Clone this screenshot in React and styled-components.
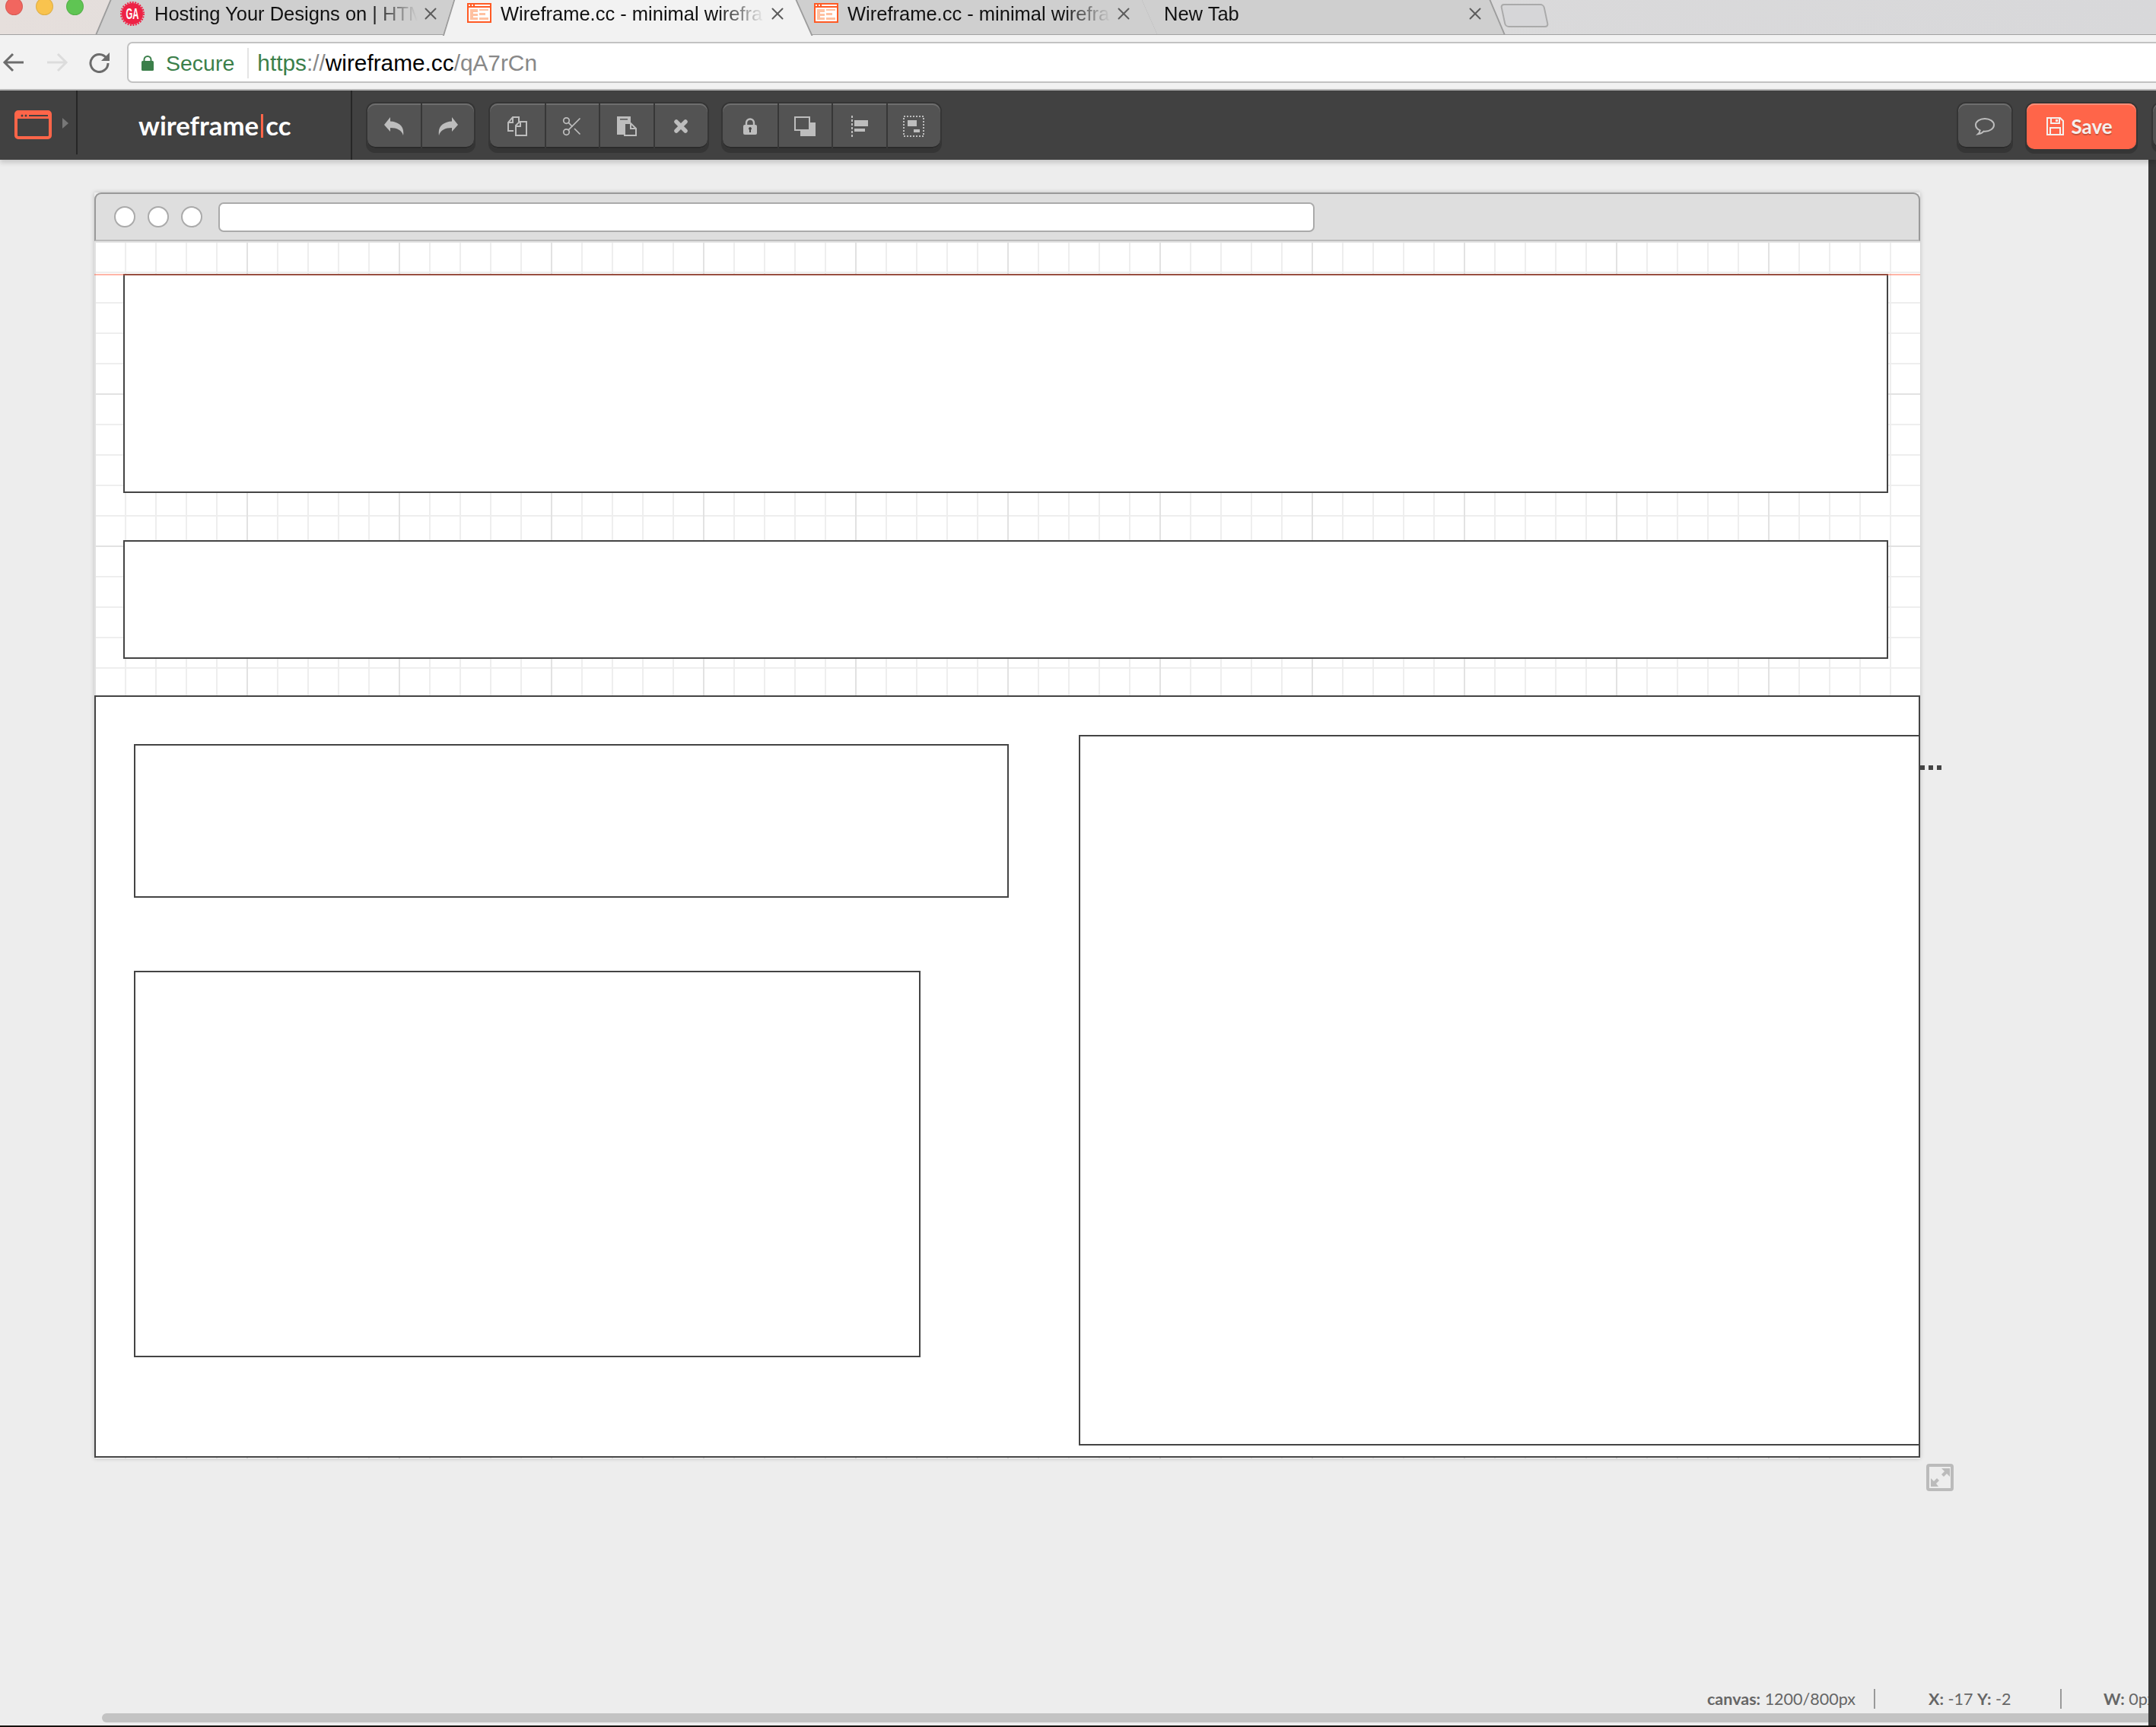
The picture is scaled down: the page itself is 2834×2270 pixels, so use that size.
import React from 'react';
import styled, { createGlobalStyle } from 'styled-components';
import { Scissors, X } from 'lucide-react';

const GlobalStyle = createGlobalStyle`
  html, body {
    margin: 0;
    padding: 0;
    width: 2834px;
    height: 2270px;
    overflow: hidden;
    background: #ededed;
  }
  * { box-sizing: border-box; }
`;

const Page = styled.div`
  width: 2834px;
  height: 2270px;
  display: flex;
  flex-direction: column;
  overflow: hidden;
  font-family: 'Liberation Sans', Arial, sans-serif;
`;

/* browser chrome */
const TabBar = styled.div`
  position: relative;
  flex: none;
  height: 46px;
  display: flex;
  padding-left: 126px;
  background: linear-gradient(to right, #e6dfdc, #dcdbdb 30%, #d8d8da);
  border-bottom: 1px solid #a2a2a2;
`;

const Lights = styled.div`
  position: absolute;
  left: 7px;
  top: -3px;
  display: flex;
  gap: 17px;
`;

const Light = styled.span`
  width: 23px;
  height: 23px;
  border-radius: 50%;
  background: ${p => p.$color};
  border: 1px solid rgba(0, 0, 0, 0.1);
`;

const Tab = styled.div`
  position: relative;
  flex: none;
  width: ${p => p.$width}px;
  height: ${p => (p.$active ? 47 : 45)}px;
  margin-left: ${p => p.$overlap || 0}px;
  padding-left: ${p => p.$pad}px;
  z-index: ${p => (p.$active ? 2 : 1)};
  display: flex;
  align-items: flex-start;
  &::before {
    content: '';
    position: absolute;
    inset: 0;
    background: ${p => (p.$active ? '#f2f2f2' : '#cfcfcf')};
    clip-path: polygon(${p => p.$clip});
  }
`;

const TabEdge = styled.span`
  position: absolute;
  top: 0;
  bottom: 0;
  left: ${p => p.$left}px;
  width: 1.5px;
  background: #9c9c9c;
  transform: skewX(${p => p.$skew}deg);
`;

const TabIcon = styled.svg`
  position: relative;
  flex: none;
  display: block;
  margin-top: ${p => p.$top}px;
`;

const TabTitle = styled.span`
  position: relative;
  flex: none;
  width: ${p => p.$width}px;
  margin-left: ${p => p.$gap}px;
  font-size: 25.5px;
  line-height: 36px;
  color: #111;
  white-space: nowrap;
  -webkit-mask-image: linear-gradient(to right, #000 82%, transparent 100%);
  mask-image: linear-gradient(to right, #000 82%, transparent 100%);
`;

const TabClose = styled(X)`
  position: relative;
  flex: none;
  margin: 5px 0 0 4px;
  color: #5d5d5d;
`;

const NewTab = styled.div`
  flex: none;
  width: 58px;
  height: 31px;
  margin: 5px 0 0 -2px;
  background: #d6d6d8;
  border: 2px solid #aaa;
  border-radius: 5px;
  transform: skewX(12deg);
`;

const AddressRow = styled.div`
  flex: none;
  height: 73px;
  display: flex;
  align-items: center;
  background: #f2f2f2;
  border-bottom: 2px solid #b8b8b8;
`;

const NavIcon = styled.svg`
  flex: none;
  display: block;
  margin-left: ${p => p.$left}px;
  fill: none;
  stroke: ${p => p.$color};
  stroke-width: 3;
`;

const AddressBox = styled.div`
  flex: 1;
  height: 54px;
  margin: 0 -20px 0 22px;
  display: flex;
  align-items: center;
  padding: 2px 0 0 17px;
  background: #fff;
  border: 2px solid #c2c2c2;
  border-radius: 7px;
`;

const SecureLabel = styled.span`
  margin-left: 16px;
  padding-right: 17px;
  height: 40px;
  line-height: 40px;
  font-size: 28.5px;
  color: #3b7f4a;
  border-right: 2px solid #e4e4e4;
`;

const Url = styled.span`
  margin-left: 11px;
  font-size: 29.8px;
  color: #888;
`;

const UrlPart = styled.span`
  color: ${p => p.$color};
`;

/* editor toolbar */
const Toolbar = styled.div`
  position: relative;
  z-index: 5;
  flex: none;
  height: 91px;
  display: flex;
  background: #414141;
  box-shadow: 0 4px 6px rgba(0, 0, 0, 0.16);
  overflow: hidden;
`;

const MenuCell = styled.div`
  flex: none;
  width: 102px;
  height: 84px;
  display: flex;
  align-items: center;
  padding: 6px 0 0 19px;
  border-right: 2px solid #262626;
`;

const Caret = styled.span`
  margin: -4px 0 0 14px;
  border-left: 8px solid #777;
  border-top: 7px solid transparent;
  border-bottom: 7px solid transparent;
`;

const LogoCell = styled.div`
  flex: none;
  width: 361px;
  display: flex;
  align-items: center;
  padding-left: 80px;
  border-right: 2px solid #262626;
`;

const Logo = styled.div`
  font-family: Lato, sans-serif;
  font-weight: 700;
  font-size: 34.8px;
  line-height: 40px;
  color: #fff;
  display: flex;
  align-items: center;
`;

const LogoBar = styled.span`
  width: 3px;
  height: 31px;
  margin: 2px 3px 0;
  background: #ff6549;
`;

const Group = styled.div`
  flex: none;
  align-self: flex-start;
  margin: 17px 0 0 ${p => p.$left}px;
  height: 59px;
  display: flex;
  border-radius: 10px;
  background: #535353;
  box-shadow: inset 0 2px 0 #6e6e6e, inset 0 -2px 0 #2b2b2b, 0 0 0 2px #353535, 0 4px 0 2px #353535;
`;

const ToolButton = styled.div`
  width: ${p => p.$width || 71.5}px;
  display: flex;
  align-items: center;
  justify-content: center;
  color: #bdbdbd;
  & + & {
    border-left: 2px solid #373737;
  }
`;

const Glyph = styled.svg`
  display: block;
  fill: currentColor;
`;

const SaveButton = styled.div`
  flex: none;
  align-self: flex-start;
  width: 144px;
  height: 60px;
  margin: 17px 0 0 20px;
  padding-right: 5px;
  display: flex;
  align-items: center;
  justify-content: center;
  gap: 9px;
  border-radius: 10px;
  background: #ff6549;
  color: #f4f0ee;
  font-family: Lato, sans-serif;
  font-weight: 700;
  font-size: 26px;
  text-shadow: 0 2px 0 #c9513b;
  box-shadow: inset 0 2px 0 #ff8e78, 0 0 0 2px #353535, 0 4px 0 2px #353535;
`;

const CutButton = styled(Group)`
  width: 60px;
`;

/* workspace */
const Workspace = styled.div`
  flex: 1;
  min-height: 0;
  display: flex;
`;

const Main = styled.div`
  flex: 1;
  min-width: 0;
  display: flex;
  flex-direction: column;
  background: #ededed;
  overflow: hidden;
`;

const SidePanel = styled.div`
  flex: none;
  width: 10px;
  background: #383838;
`;

const BottomEdge = styled.div`
  flex: none;
  height: 2px;
  background: #17120f;
`;

const CanvasArea = styled.div`
  flex: none;
  padding: 43px 0 0 124px;
`;

const MockWindow = styled.div`
  width: 2400px;
  box-shadow: 0 0 6px rgba(0, 0, 0, 0.2);
`;

const MockBar = styled.div`
  height: 64px;
  display: flex;
  align-items: center;
  padding-left: 24px;
  background: #dedede;
  border: 2px solid #999;
  border-bottom: 2px solid #bbb;
  border-radius: 9px 9px 0 0;
`;

const MockDot = styled.span`
  flex: none;
  width: 28px;
  height: 28px;
  margin-right: 16px;
  background: #fff;
  border: 2px solid #aaa;
  border-radius: 50%;
`;

const MockInput = styled.div`
  width: 1441px;
  height: 39px;
  margin-left: 5px;
  background: #fff;
  border: 2px solid #aaa;
  border-radius: 7px;
`;

const MockCanvas = styled.div`
  position: relative;
  height: 1600px;
  background-color: #fff;
  background-image:
    linear-gradient(to right, #e2e2e2 2px, transparent 2px),
    linear-gradient(to bottom, #e2e2e2 2px, transparent 2px),
    linear-gradient(to right, #eee 2px, transparent 2px),
    linear-gradient(to bottom, #eee 2px, transparent 2px);
  background-size: 200px 200px, 200px 200px, 40px 40px, 40px 40px;
`;

const Shape = styled.div`
  position: absolute;
  left: ${p => p.$x}px;
  top: ${p => p.$y}px;
  width: ${p => p.$w}px;
  height: ${p => p.$h}px;
  background: #fff;
  border: 2px solid #444;
`;

const Guide = styled.div`
  position: absolute;
  left: 0;
  right: 0;
  top: 43px;
  height: 2px;
  background: rgba(255, 90, 60, 0.45);
`;

const Handle = styled.div`
  position: absolute;
  left: 2400px;
  top: 689px;
  display: flex;
  gap: 5px;
`;

const HandleDot = styled.span`
  width: 6px;
  height: 6px;
  background: #444;
`;

const ExpandIcon = styled.svg`
  position: absolute;
  left: 2408px;
  top: 1607px;
  display: block;
`;

const StatusBar = styled.div`
  flex: none;
  height: 26px;
  margin-top: auto;
  padding-left: 2244px;
  display: flex;
  align-items: center;
  white-space: nowrap;
  font-family: Lato, sans-serif;
  font-size: 21.5px;
  color: #666;
`;

const StatusItem = styled.span`
  flex: none;
  width: ${p => p.$width}px;
  padding-left: ${p => p.$pad || 0}px;
`;

const StatusSep = styled.span`
  flex: none;
  width: 2px;
  height: 26px;
  background: #999;
`;

const ScrollTrack = styled.div`
  flex: none;
  height: 12px;
  margin: 6px 0 4px 134px;
  background: #c3c3c3;
  border-radius: 6px 0 0 6px;
`;

const GaIcon = () => (
  <TabIcon $top={2} width="32" height="32" viewBox="0 0 32 32">
    <circle cx="16" cy="16" r="14" fill="#ee2245" />
    <circle cx="16" cy="16" r="15" fill="none" stroke="#ee2245" strokeWidth="2" strokeDasharray="2 1.5" />
    <text x="16" y="23" textAnchor="middle" textLength="17" lengthAdjust="spacingAndGlyphs" fontFamily="Liberation Sans" fontWeight="700" fontSize="20" fill="#fff">GA</text>
  </TabIcon>
);

const FrameIcon = () => (
  <TabIcon $top={4} width="32" height="26" viewBox="0 0 32 26">
    <rect width="32" height="26" fill="#ff5a24" />
    <rect x="2" y="6" width="28" height="18" fill="#fff" />
    <rect x="2" y="2" width="2" height="2" fill="#fff" />
    <rect x="6" y="2" width="2" height="2" fill="#fff" />
    <rect x="10" y="2" width="20" height="2" fill="#fff" />
    <rect x="4" y="8" width="10" height="14" fill="#ffc1a1" />
    <rect x="16" y="8" width="12" height="2" fill="#ffc1a1" />
    <rect x="16" y="13" width="8" height="3" fill="#ffc1a1" />
    <rect x="16" y="19" width="12" height="3" fill="#ffc1a1" />
    <rect x="8" y="12" width="6" height="2" fill="#fff" />
    <rect x="8" y="17" width="6" height="2" fill="#fff" />
  </TabIcon>
);

const UndoGlyph = ({ flip }) => (
  <Glyph width="26" height="24" viewBox="0 0 26 24">
    <g transform={flip ? 'translate(26 0) scale(-1 1)' : undefined}>
      <path d="M0 10 8 0v5.5C19 6 27 12 25 24 23 17 17 14 8 14v5z" />
    </g>
  </Glyph>
);

const CopyGlyph = () => (
  <Glyph width="26" height="26" viewBox="0 0 26 26">
    <g fill="none" stroke="currentColor" strokeWidth="2">
      <path d="M8 19H1V8l6-7h8v7" />
      <path d="M1 8h6V1" />
      <path d="M11 25V12l5-5h9v18z" fill="#535353" />
      <path d="M11 13h6V7" />
    </g>
  </Glyph>
);

const PasteGlyph = () => (
  <Glyph width="26" height="26" viewBox="0 0 26 26">
    <path d="M0 0h18v8l-6 4v12H0z" />
    <rect x="4" y="3" width="10" height="1.5" fill="#535353" />
    <path d="M10 25V9h8l7 7v9z" fill="#535353" stroke="currentColor" strokeWidth="2" />
    <path d="M18 9v7h7" fill="none" stroke="currentColor" strokeWidth="2" />
  </Glyph>
);

const CloseGlyph = () => (
  <Glyph width="18" height="18" viewBox="0 0 18 18">
    <path d="M3 3l12 12M15 3 3 15" stroke="currentColor" strokeWidth="5.5" strokeLinecap="round" />
  </Glyph>
);

const LockGlyph = () => (
  <Glyph width="18" height="22" viewBox="0 0 18 22">
    <path d="M4 10V6.500a5 5 0 0 1 10 0V10" fill="none" stroke="currentColor" strokeWidth="2.4" />
    <path d="M2 9h14a2 2 0 0 1 2 2v9a2 2 0 0 1-2 2H2a2 2 0 0 1-2-2v-9a2 2 0 0 1 2-2z" />
    <path d="M9 12a2 2 0 0 1 1 3.700V19H8v-3.300A2 2 0 0 1 9 12z" fill="#444" />
  </Glyph>
);

const LayerGlyph = () => (
  <Glyph width="28" height="26" viewBox="0 0 28 26">
    <path d="M8 19h13V8h7v18H8z" />
    <rect x="1" y="1" width="19" height="17" fill="none" stroke="currentColor" strokeWidth="2" />
  </Glyph>
);

const AlignGlyph = () => (
  <Glyph width="22" height="28" viewBox="0 0 22 28">
    <path d="M1 0v28" stroke="currentColor" strokeWidth="2" strokeDasharray="3 2" fill="none" />
    <rect x="4" y="6" width="18" height="8" />
    <rect x="4" y="17" width="14" height="4" />
  </Glyph>
);

const GroupGlyph = () => (
  <Glyph width="28" height="28" viewBox="0 0 28 28">
    <rect x="1" y="1" width="26" height="26" fill="none" stroke="currentColor" strokeWidth="2" strokeDasharray="2 2" />
    <rect x="6" y="6" width="12" height="8" />
    <rect x="14" y="18" width="8" height="4" />
  </Glyph>
);

const tabs = [
  { width: 470, pad: 32, gap: 13, titleWidth: 346, clip: '19px 0, 470px 0, 456px 45px, 0 45px', icon: <GaIcon />, title: 'Hosting Your Designs on | HTM', edges: [{ left: 9, skew: -23 }] },
  { width: 485, pad: 32, gap: 12, titleWidth: 347, overlap: -14, clip: '14px 0, 464px 0, 485px 47px, 0 47px', active: true, icon: <FrameIcon />, title: 'Wireframe.cc - minimal wirefra', edges: [{ left: 7, skew: -17 }, { left: 474, skew: 24 }] },
  { width: 474, pad: 23, gap: 12, titleWidth: 346, overlap: -20, clip: '0 0, 454px 0, 474px 45px, 20px 45px', icon: <FrameIcon />, title: 'Wireframe.cc - minimal wirefra', edges: [{ left: 464, skew: 24 }] },
  { width: 476, pad: 29, gap: 0, titleWidth: 392, overlap: -20, clip: '0 0, 457px 0, 476px 45px, 20px 45px', title: 'New Tab', edges: [{ left: 466, skew: 23 }] },
];

const shapes = [
  { x: 38, y: 43, w: 2320, h: 288 },
  { x: 38, y: 393, w: 2320, h: 156 },
  { x: 0, y: 597, w: 2400, h: 1002 },
  { x: 52, y: 661, w: 1150, h: 202 },
  { x: 52, y: 959, w: 1034, h: 508 },
  { x: 1294, y: 649, w: 1106, h: 934 },
];

const App = () => (
  <Page>
    <GlobalStyle />
    <TabBar>
      <Lights>
        <Light $color="#f1665f" />
        <Light $color="#f9c34e" />
        <Light $color="#5fc553" />
      </Lights>
      {tabs.map(t => (
        <Tab key={t.pad + t.width} $width={t.width} $pad={t.pad} $clip={t.clip} $active={t.active} $overlap={t.overlap}>
          {t.edges.map(e => (
            <TabEdge key={e.left} $left={e.left} $skew={e.skew} />
          ))}
          {t.icon}
          <TabTitle $width={t.titleWidth} $gap={t.gap}>{t.title}</TabTitle>
          <TabClose size={26} strokeWidth={1.8} />
        </Tab>
      ))}
      <NewTab />
    </TabBar>

    <AddressRow>
      <NavIcon $left={3} $color="#6c6c6c" width="28" height="26" viewBox="0 0 28 26">
        <path d="M28 13H3M14 2 3 13l11 11" />
      </NavIcon>
      <NavIcon $left={31} $color="#dcdcdc" width="28" height="26" viewBox="0 0 28 26">
        <path d="M0 13h25M14 2l11 11-11 11" />
      </NavIcon>
      <NavIcon $left={27} $color="#6c6c6c" width="28" height="28" viewBox="0 0 28 28">
        <path d="M23 8.500A11.500 11.500 0 1 0 25 15" />
        <path d="M27 1v11H16z" fill="#6c6c6c" stroke="none" />
      </NavIcon>
      <AddressBox>
        <svg width="16" height="20" viewBox="0 0 16 20">
          <path d="M3.500 9V5.500a4.500 4.500 0 0 1 9 0V9" fill="none" stroke="#3b7f4a" strokeWidth="2" />
          <rect y="7" width="16" height="13" rx="1.500" fill="#3b7f4a" />
        </svg>
        <SecureLabel>Secure</SecureLabel>
        <Url>
          <UrlPart $color="#3b7f4a">https</UrlPart>
          <UrlPart $color="#888">://</UrlPart>
          <UrlPart $color="#000">wireframe.cc</UrlPart>/qA7rCn
        </Url>
      </AddressBox>
    </AddressRow>

    <Toolbar>
      <MenuCell>
        <svg width="49" height="38" viewBox="0 0 49 38">
          <rect x="2" y="2" width="45" height="34" rx="3" fill="none" stroke="#ff6549" strokeWidth="4" />
          <rect x="3" y="3" width="43" height="8" fill="#ff6549" />
          <circle cx="10" cy="7" r="1.500" fill="#414141" />
          <circle cx="15" cy="7" r="1.500" fill="#414141" />
          <rect x="19" y="6" width="25" height="2" fill="#414141" />
        </svg>
        <Caret />
      </MenuCell>
      <LogoCell>
        <Logo>
          wireframe<LogoBar />cc
        </Logo>
      </LogoCell>

      <Group $left={20}>
        <ToolButton $width={70}><UndoGlyph /></ToolButton>
        <ToolButton $width={70}><UndoGlyph flip /></ToolButton>
      </Group>
      <Group $left={21}>
        <ToolButton><CopyGlyph /></ToolButton>
        <ToolButton><Scissors size={30} strokeWidth={1.4} /></ToolButton>
        <ToolButton><PasteGlyph /></ToolButton>
        <ToolButton><CloseGlyph /></ToolButton>
      </Group>
      <Group $left={20}>
        <ToolButton><LockGlyph /></ToolButton>
        <ToolButton><LayerGlyph /></ToolButton>
        <ToolButton><AlignGlyph /></ToolButton>
        <ToolButton><GroupGlyph /></ToolButton>
      </Group>

      <Group $left={1338}>
        <ToolButton $width={70}>
          <Glyph width="28" height="24" viewBox="0 0 28 24">
            <path d="M14 2C7.400 2 2 5.700 2 10.300c0 3 2.300 5.600 5.700 7-.3 1.900-1.300 3.700-2.700 5 3-.4 5.700-1.600 7.500-3.700.5 0 1 .1 1.500.1 6.600 0 12-3.800 12-8.400S20.600 2 14 2z" fill="none" stroke="currentColor" strokeWidth="2" />
          </Glyph>
        </ToolButton>
      </Group>
      <SaveButton>
        <Glyph width="23" height="24" viewBox="0 0 23 24">
          <path d="M1 1h17l4 4v18H1z" fill="none" stroke="currentColor" strokeWidth="2" />
          <path d="M6 1h11v7H6z" fill="none" stroke="currentColor" strokeWidth="2" />
          <path d="M12 3h3v3h-3z" />
          <path d="M5 14h13v9H5z" fill="none" stroke="currentColor" strokeWidth="2" />
        </Glyph>
        Save
      </SaveButton>
      <CutButton $left={22} />
    </Toolbar>

    <Workspace>
      <Main>
        <CanvasArea>
          <MockWindow>
            <MockBar>
              <MockDot />
              <MockDot />
              <MockDot />
              <MockInput />
            </MockBar>
            <MockCanvas>
              {shapes.map(s => (
                <Shape key={`${s.x}-${s.y}`} $x={s.x} $y={s.y} $w={s.w} $h={s.h} />
              ))}
              <Guide />
              <Handle>
                <HandleDot />
                <HandleDot />
                <HandleDot />
              </Handle>
              <ExpandIcon width="36" height="36" viewBox="0 0 36 36">
                <rect x="2" y="2" width="32" height="32" rx="2" fill="none" stroke="#bbb" strokeWidth="4" />
                <path d="M20 6h11v11l-4-4-4 4-3-3 4-4zM16 30H6V19l4 4 4-4 3 3-4 4z" fill="#bbb" />
              </ExpandIcon>
            </MockCanvas>
          </MockWindow>
        </CanvasArea>
        <StatusBar>
          <StatusItem $width={219}><b>canvas:</b> 1200/800px</StatusItem>
          <StatusSep />
          <StatusItem $width={243} $pad={70}><b>X:</b> -17 <b>Y:</b> -2</StatusItem>
          <StatusSep />
          <StatusItem $width={120} $pad={55}><b>W:</b> 0px</StatusItem>
        </StatusBar>
        <ScrollTrack />
      </Main>
      <SidePanel />
    </Workspace>
    <BottomEdge />
  </Page>
);

export default App;
